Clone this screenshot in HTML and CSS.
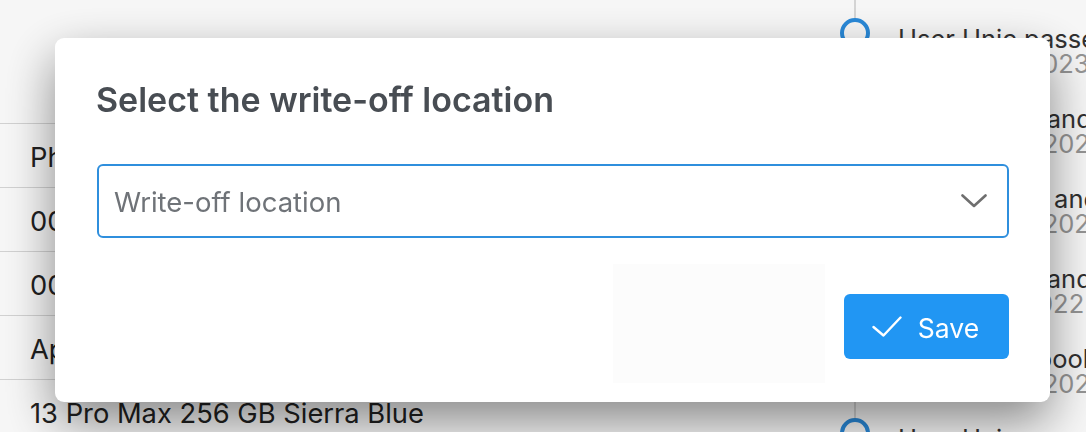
FILE: index.html
```html
<!DOCTYPE html>
<html lang="en">
<head>
<meta charset="utf-8">
<title>Select the write-off location</title>
<link rel="stylesheet" href="styles.css">
</head>
<body>
<div class="page">
  <div class="main">
    <div class="table">
      <div class="row">Phone model details</div>
      <div class="row">00012345678</div>
      <div class="row">00098765432</div>
      <div class="row">Apple iPhone</div>
      <div class="row">13 Pro Max 256 GB Sierra Blue</div>
    </div>
  </div>
  <aside class="timeline">
    <div class="tl-item tl-prev">
      <div class="tl-title">Write-off request sent</div>
      <div class="tl-date">Mar 30 (12:40) (Q1)</div>
    </div>
    <div class="tl-item">
      <span class="dot"></span>
      <div class="tl-title">User Unic passed</div>
      <div class="tl-date">March 28, 2023</div>
    </div>
    <div class="tl-item">
      <span class="dot"></span>
      <div class="tl-title">Device sent and</div>
      <div class="tl-date">February 9, 2022</div>
    </div>
    <div class="tl-item">
      <span class="dot"></span>
      <div class="tl-title">Device used and</div>
      <div class="tl-date">February 3, 2022</div>
    </div>
    <div class="tl-item">
      <span class="dot"></span>
      <div class="tl-title">Device sent and</div>
      <div class="tl-date">March 18, 2022</div>
    </div>
    <div class="tl-item">
      <span class="dot"></span>
      <div class="tl-title">Added to a book</div>
      <div class="tl-date">October 18, 2022</div>
    </div>
    <div class="tl-item">
      <span class="dot"></span>
      <div class="tl-title">User Unic passed</div>
      <div class="tl-date">January 1, 2022</div>
    </div>
  </aside>
</div>

<div class="overlay"></div>
<div class="dialog">
  <h2 class="dialog-title">Select the write-off location</h2>
  <div class="select">
    <span class="placeholder">Write-off location</span>
    <svg class="chevron" width="26" height="14" viewBox="0 0 26 14" aria-hidden="true">
      <path d="M1.5 1.5 L13 12 L24.5 1.5" fill="none" stroke="#6f6f6f" stroke-width="2.6" stroke-linecap="round" stroke-linejoin="round"/>
    </svg>
  </div>
  <div class="footer">
    <div class="ghost"></div>
    <button class="btn-save">
      <svg class="check" width="30" height="21" viewBox="0 0 30 21" aria-hidden="true">
        <path d="M1.5 11 L11.5 19.5 L28.5 1.5" fill="none" stroke="#fff" stroke-width="2.4" stroke-linecap="round" stroke-linejoin="round"/>
      </svg>
      <span>Save</span>
    </button>
  </div>
</div>
</body>
</html>
```

FILE: styles.css
```css
html, body {
  margin: 0;
  padding: 0;
}
body {
  width: 1086px;
  height: 432px;
  overflow: hidden;
  background: #ffffff;
  font-family: Inter, "Noto Sans", "Liberation Sans", sans-serif;
  color: #222;
}

.page {
  display: flex;
  height: 432px;
  overflow: hidden;
}

.main {
  flex: none;
  width: 840px;
  padding-top: 123px;
}

.table {
  display: flex;
  flex-direction: column;
}

.row {
  height: 64px;
  box-sizing: border-box;
  border-top: 1px solid #d9d9d9;
  padding: 4px 0 0 30px;
  display: flex;
  align-items: center;
  font-size: 27.3px;
  color: #222;
  white-space: nowrap;
}

.timeline {
  flex: 1;
  min-width: 0;
  position: relative;
  margin-left: 14px;
  padding-left: 42px;
  border-left: 2px solid #dcdcdc;
  white-space: nowrap;
}
.tl-item {
  position: relative;
  height: 80px;
}
.tl-prev {
  margin-top: -54px;
}
.dot {
  position: absolute;
  left: -58px;
  top: -8px;
  width: 22px;
  height: 22px;
  border: 4px solid #2b8ee0;
  border-radius: 50%;
  background: #fff;
}
.tl-title {
  font-size: 25.5px;
  line-height: 25px;
  color: #333;
}
.tl-date {
  font-size: 25.5px;
  line-height: 25px;
  color: #9a9a9a;
}

.overlay {
  position: fixed;
  inset: 0;
  background: rgba(0, 0, 0, 0.035);
}

.dialog {
  position: fixed;
  left: 55px;
  top: 38px;
  width: 995px;
  box-sizing: border-box;
  padding: 42px 41px 19px 41px;
  background: #fff;
  border-radius: 9px;
  box-shadow: 0 20px 50px rgba(0, 0, 0, 0.45);
  display: flex;
  flex-direction: column;
}

.dialog-title {
  margin: 0;
  font-size: 34px;
  line-height: 40px;
  font-weight: 600;
  color: #484d53;
}

.select {
  margin-top: 44px;
  margin-left: 1px;
  height: 74px;
  box-sizing: border-box;
  border: 2px solid #2f8fdd;
  border-radius: 6px;
  display: flex;
  align-items: center;
  justify-content: space-between;
  padding: 2px 20px 0 15px;
}
.placeholder {
  font-size: 27.5px;
  color: #6f7378;
}
.chevron {
  display: block;
  margin-top: -2px;
}

.footer {
  margin-top: 26px;
  display: flex;
  justify-content: flex-end;
  align-items: center;
}
.ghost {
  width: 212px;
  height: 119px;
  background: #fcfcfc;
  margin-right: 19px;
}
.btn-save {
  margin-top: 6px;
  width: 165px;
  height: 65px;
  border: none;
  border-radius: 6px;
  background: #2196f3;
  color: #fff;
  font-family: inherit;
  font-size: 26.5px;
  display: flex;
  align-items: center;
  justify-content: center;
  gap: 16px;
  padding: 2px 2px 0 0;
}
.check {
  display: block;
  margin-top: -2px;
}
```
